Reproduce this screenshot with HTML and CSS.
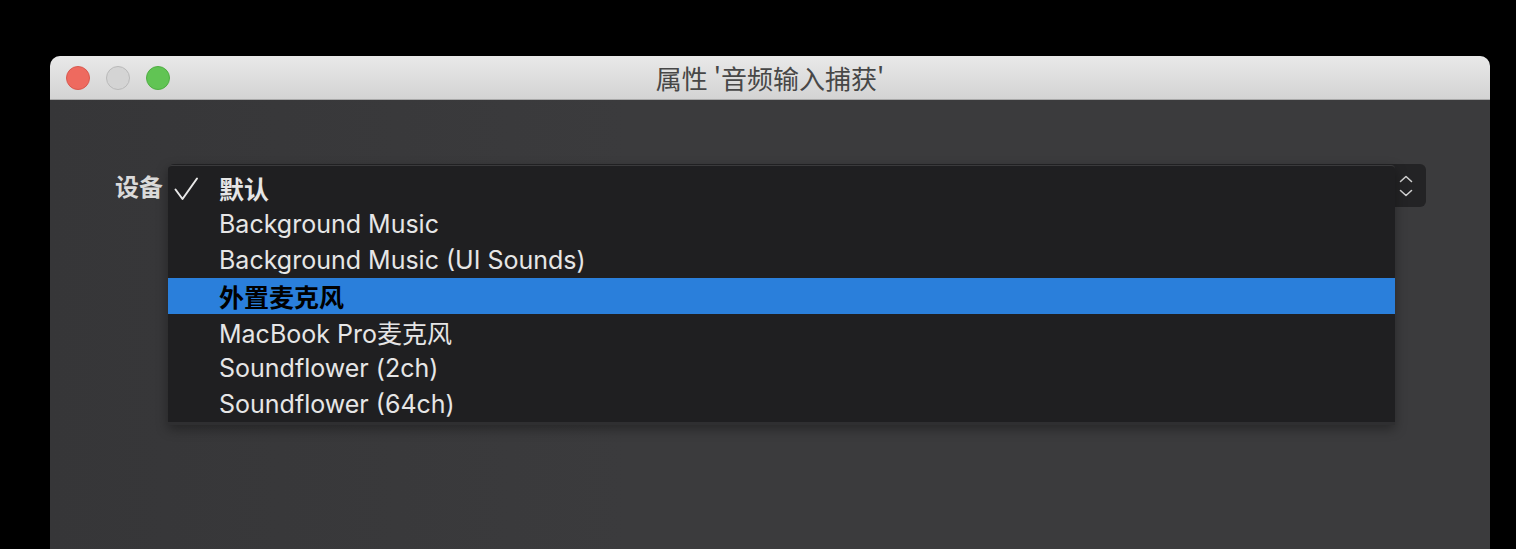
FILE: index.html
```html
<!DOCTYPE html>
<html lang="zh">
<head>
<meta charset="utf-8">
<title>属性 '音频输入捕获'</title>
<link rel="stylesheet" href="styles.css">
</head>
<body>
<div class="window">
  <div class="titlebar">
    <div class="lights">
      <span class="light red"></span>
      <span class="light gray"></span>
      <span class="light green"></span>
    </div>
    <div class="title">属性 '音频输入捕获'</div>
  </div>
  <div class="content">
    <div class="form-row">
      <label class="label">设备</label>
      <div class="popup">
        <svg class="chevrons" width="14" height="22" viewBox="0 0 14 22">
          <path d="M1.5 6.5 L7 1.5 L12.5 6.5" fill="none" stroke="#cfcfcf" stroke-width="1.6" stroke-linecap="round" stroke-linejoin="round"/>
          <path d="M1.5 15.5 L7 20.5 L12.5 15.5" fill="none" stroke="#cfcfcf" stroke-width="1.6" stroke-linecap="round" stroke-linejoin="round"/>
        </svg>
      </div>
    </div>
  </div>
</div>
<div class="menu">
  <div class="item checked">
    <svg class="check" width="26" height="26" viewBox="0 0 26 26">
      <path d="M2.5 13.5 L9.5 23 L24 2.5" fill="none" stroke="#e8e8e8" stroke-width="2" stroke-linecap="round" stroke-linejoin="round"/>
    </svg>
    <span class="cjk-bold">默认</span>
  </div>
  <div class="item">Background Music</div>
  <div class="item">Background Music (UI Sounds)</div>
  <div class="item selected"><span class="cjk-bold">外置麦克风</span></div>
  <div class="item">MacBook Pro麦克风</div>
  <div class="item">Soundflower (2ch)</div>
  <div class="item">Soundflower (64ch)</div>
</div>
</body>
</html>
```

FILE: styles.css
```css
* { box-sizing: border-box; }
html, body {
  margin: 0;
  padding: 0;
  background: #000;
  width: 1516px;
  height: 549px;
  overflow: hidden;
  font-family: Inter, "Noto Sans CJK SC", sans-serif;
}
body { padding: 56px 26px 0 50px; }
.window {
  width: 1440px;
  height: 520px;
  border-radius: 10px 10px 0 0;
  overflow: hidden;
  background: linear-gradient(90deg, #363638 0%, #3b3b3d 40%, #3b3b3d 100%);
  display: flex;
  flex-direction: column;
}
.titlebar {
  height: 44px;
  flex: none;
  background: linear-gradient(#e9e9e9, #d3d3d3);
  border-bottom: 1px solid #a9a9a9;
  display: flex;
  align-items: center;
  position: relative;
  padding-left: 16px;
}
.lights { display: flex; gap: 16px; position: relative; z-index: 1; }
.light {
  width: 24px;
  height: 24px;
  border-radius: 50%;
  display: block;
}
.red { background: #ee6a5f; border: 1px solid #d8594f; }
.gray { background: #d4d4d4; border: 1px solid #b9b9b9; }
.green { background: #61c454; border: 1px solid #4fae43; }
.title {
  position: absolute;
  left: 0; right: 0; top: 0; bottom: 0;
  display: flex;
  align-items: center;
  justify-content: center;
  font-size: 26px;
  color: #474747;
  font-family: "Noto Sans CJK SC", sans-serif;
}
.content { padding: 64px 64px 0 65px; }
.form-row { display: flex; align-items: center; gap: 5px; }
.label {
  font-family: "Noto Sans CJK SC", sans-serif;
  font-size: 24px;
  font-weight: 600;
  color: #dadada;
  white-space: nowrap;
}
.popup {
  flex: 1;
  height: 43px;
  background: #232325;
  border-radius: 6px;
  display: flex;
  align-items: center;
  justify-content: flex-end;
  padding-right: 13px;
}
.chevrons { display: block; }
.menu {
  position: absolute;
  left: 168px;
  top: 165px;
  width: 1227px;
  padding: 4px 0 0;
  background: #1f1f21;
  border-top: 1px solid #3a3a3c;
  border-bottom: 3px solid #2f2f31;
  border-radius: 4px 4px 0 0;
  box-shadow: 0 4px 12px rgba(0,0,0,0.35);
}
.item {
  height: 36px;
  padding-left: 51px;
  display: flex;
  align-items: center;
  font-size: 25px;
  color: #e6e6e6;
  position: relative;
  white-space: nowrap;
}
.item.selected { background: #2a7fdb; color: #000; }
.cjk-bold { font-family: "Noto Sans CJK SC", sans-serif; font-weight: 700; }
.check {
  position: absolute;
  left: 5px;
  top: 6px;
  display: block;
}
```
